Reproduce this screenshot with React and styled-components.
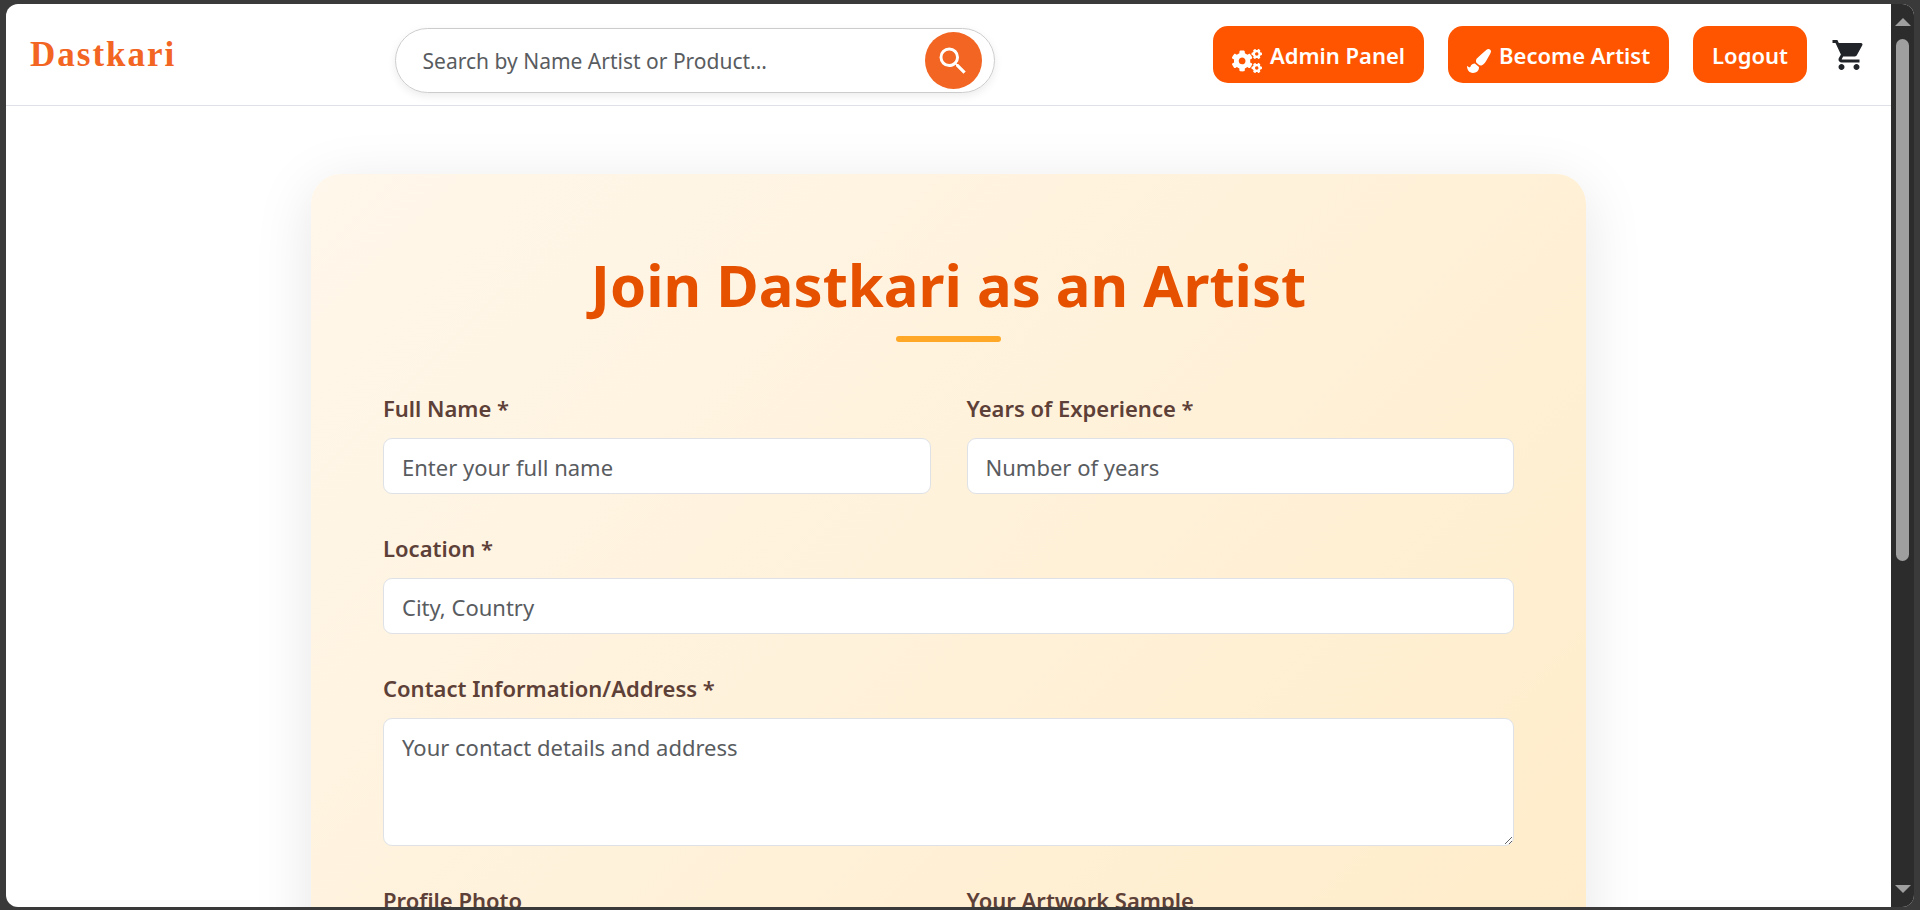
import React from "react";
import styled, { createGlobalStyle } from "styled-components";
import { MdSearch, MdShoppingCart } from "react-icons/md";
import { FaCogs, FaPaintBrush } from "react-icons/fa";

const GlobalStyle = createGlobalStyle`
  *, *::before, *::after { box-sizing: border-box; }
  body {
    margin: 0;
    background: #3a3a3a;
    color: #212529;
    font-family: "Segoe UI", "Noto Sans", "Open Sans", sans-serif;
    font-size: 22px;
    line-height: 36px;
  }
  input, textarea, button { font: inherit; color: inherit; }
`;

const Frame = styled.div`
  height: 100vh;
  padding: 4px 6px 3px;
`;

const Viewport = styled.div`
  display: flex;
  height: 100%;
  overflow: hidden;
  border-radius: 12px;
  background: #ffffff;
`;

const Page = styled.div`
  flex: 1;
  min-width: 0;
  overflow: hidden;
`;

const Header = styled.header`
  display: flex;
  align-items: center;
  justify-content: space-between;
  padding: 12px 24px;
  border-bottom: 1px solid #dee2e6;
`;

const Logo = styled.a`
  color: #f26522;
  font-family: "Times New Roman", "Liberation Serif", serif;
  font-size: 35px;
  font-weight: 700;
  letter-spacing: 2px;
  line-height: 38px;
  text-decoration: none;
`;

const SearchForm = styled.form`
  display: flex;
  align-items: center;
  width: 600px;
  height: 65px;
  margin-top: 12px;
  padding: 0 12px 0 27px;
  border: 1px solid #cccccc;
  border-radius: 33px;
  box-shadow: 0 3px 8px rgba(0, 0, 0, 0.08);
`;

const SearchInput = styled.input`
  flex: 1;
  min-width: 0;
  padding: 0;
  border: 0;
  outline: 0;
  background: transparent;
  font-size: 21px;
  &::placeholder { color: #595c5f; opacity: 1; }
`;

const SearchButton = styled.button`
  display: flex;
  align-items: center;
  justify-content: center;
  width: 57px;
  height: 57px;
  padding: 0;
  border: 0;
  border-radius: 50%;
  background: #f26522;
  color: #ffffff;
`;

const Nav = styled.nav`
  display: flex;
  align-items: center;
  gap: 24px;
`;

const NavButton = styled.button`
  display: flex;
  align-items: center;
  justify-content: center;
  gap: 8px;
  height: 57px;
  padding: 0 19px;
  border: 0;
  border-radius: 15px;
  background: #ff5500;
  color: #ffffff;
  font-weight: 600;
  white-space: nowrap;
  svg {
    width: ${(p) => (p.$wideIcon ? "30px" : "24px")};
    height: 24px;
    margin-top: 12px;
  }
`;

const CartLink = styled.a`
  display: flex;
  color: #212529;
`;

const Card = styled.main`
  max-width: 1275px;
  min-height: 1210px;
  margin: 68px auto 72px;
  padding: 72px;
  border-radius: 30px;
  background: linear-gradient(135deg, #fff7eb, #ffeac2);
  box-shadow: 0 12px 60px rgba(0, 0, 0, 0.1);
`;

const Title = styled.h1`
  margin: 0;
  color: #e65100;
  font-size: 58px;
  font-weight: 700;
  line-height: 78px;
  text-align: center;
  &::after {
    content: "";
    display: block;
    width: 105px;
    height: 6px;
    margin: 12px auto 0;
    border-radius: 3px;
    background: #ffa726;
  }
`;

const FormGrid = styled.form`
  display: grid;
  grid-template-columns: 1fr 1fr;
  gap: 36px;
  margin-top: 48px;
`;

const Field = styled.div`
  grid-column: ${(p) => (p.$wide ? "1 / -1" : "auto")};
  display: flex;
  flex-direction: column;
  gap: 12px;
`;

const Label = styled.label`
  color: #5d4037;
  font-weight: 600;
`;

const Control = styled.input`
  width: 100%;
  height: ${(p) => (p.$tall ? "128px" : "56px")};
  padding: 10px 18px 8px;
  border: 1px solid #dee2e6;
  border-radius: 9px;
  background: #ffffff;
  &::placeholder { color: #595c5f; opacity: 1; }
`;

const ScrollTrack = styled.div`
  display: flex;
  flex-direction: column;
  align-items: center;
  width: 23px;
  padding: 14px 0;
  background: #2c2c2c;
`;

const ScrollArrow = styled.span`
  border: 8px solid transparent;
  border-top-width: ${(p) => (p.$down ? "8px" : "0")};
  border-bottom-width: ${(p) => (p.$down ? "0" : "8px")};
  border-${(p) => (p.$down ? "top" : "bottom")}-color: #9f9f9f;
`;

const ScrollLane = styled.div`
  flex: 1;
  width: 13px;
  margin: 13px 0 18px;
`;

const ScrollThumb = styled.div`
  height: 63%;
  border-radius: 7px;
  background: #9f9f9f;
`;

const fields = [
  { id: "fullName", label: "Full Name", placeholder: "Enter your full name", required: true },
  { id: "experience", label: "Years of Experience", placeholder: "Number of years", required: true },
  { id: "location", label: "Location", placeholder: "City, Country", required: true, wide: true },
  {
    id: "contact",
    label: "Contact Information/Address",
    placeholder: "Your contact details and address",
    required: true,
    wide: true,
    multiline: true,
  },
  { id: "photo", label: "Profile Photo", type: "file" },
  { id: "artwork", label: "Your Artwork Sample", type: "file" },
];

export default function App() {
  return (
    <Frame>
      <GlobalStyle />
      <Viewport>
        <Page>
          <Header>
            <Logo href="#">Dastkari</Logo>
            <SearchForm role="search">
              <SearchInput
                type="text"
                aria-label="Search"
                placeholder="Search by Name Artist or Product..."
              />
              <SearchButton type="button" aria-label="Submit search">
                <MdSearch size={36} />
              </SearchButton>
            </SearchForm>
            <Nav>
              <NavButton type="button" $wideIcon>
                <FaCogs />
                Admin Panel
              </NavButton>
              <NavButton type="button">
                <FaPaintBrush />
                Become Artist
              </NavButton>
              <NavButton type="button">Logout</NavButton>
              <CartLink href="#" aria-label="Cart">
                <MdShoppingCart size={36} />
              </CartLink>
            </Nav>
          </Header>
          <Card>
            <Title>Join Dastkari as an Artist</Title>
            <FormGrid>
              {fields.map((f) => (
                <Field key={f.id} $wide={f.wide}>
                  <Label htmlFor={f.id}>
                    {f.label}
                    {f.required && " *"}
                  </Label>
                  <Control
                    as={f.multiline ? "textarea" : undefined}
                    $tall={f.multiline}
                    id={f.id}
                    type={f.multiline ? undefined : f.type || "text"}
                    placeholder={f.placeholder}
                  />
                </Field>
              ))}
            </FormGrid>
          </Card>
        </Page>
        <ScrollTrack aria-hidden="true">
          <ScrollArrow />
          <ScrollLane>
            <ScrollThumb />
          </ScrollLane>
          <ScrollArrow $down />
        </ScrollTrack>
      </Viewport>
    </Frame>
  );
}
